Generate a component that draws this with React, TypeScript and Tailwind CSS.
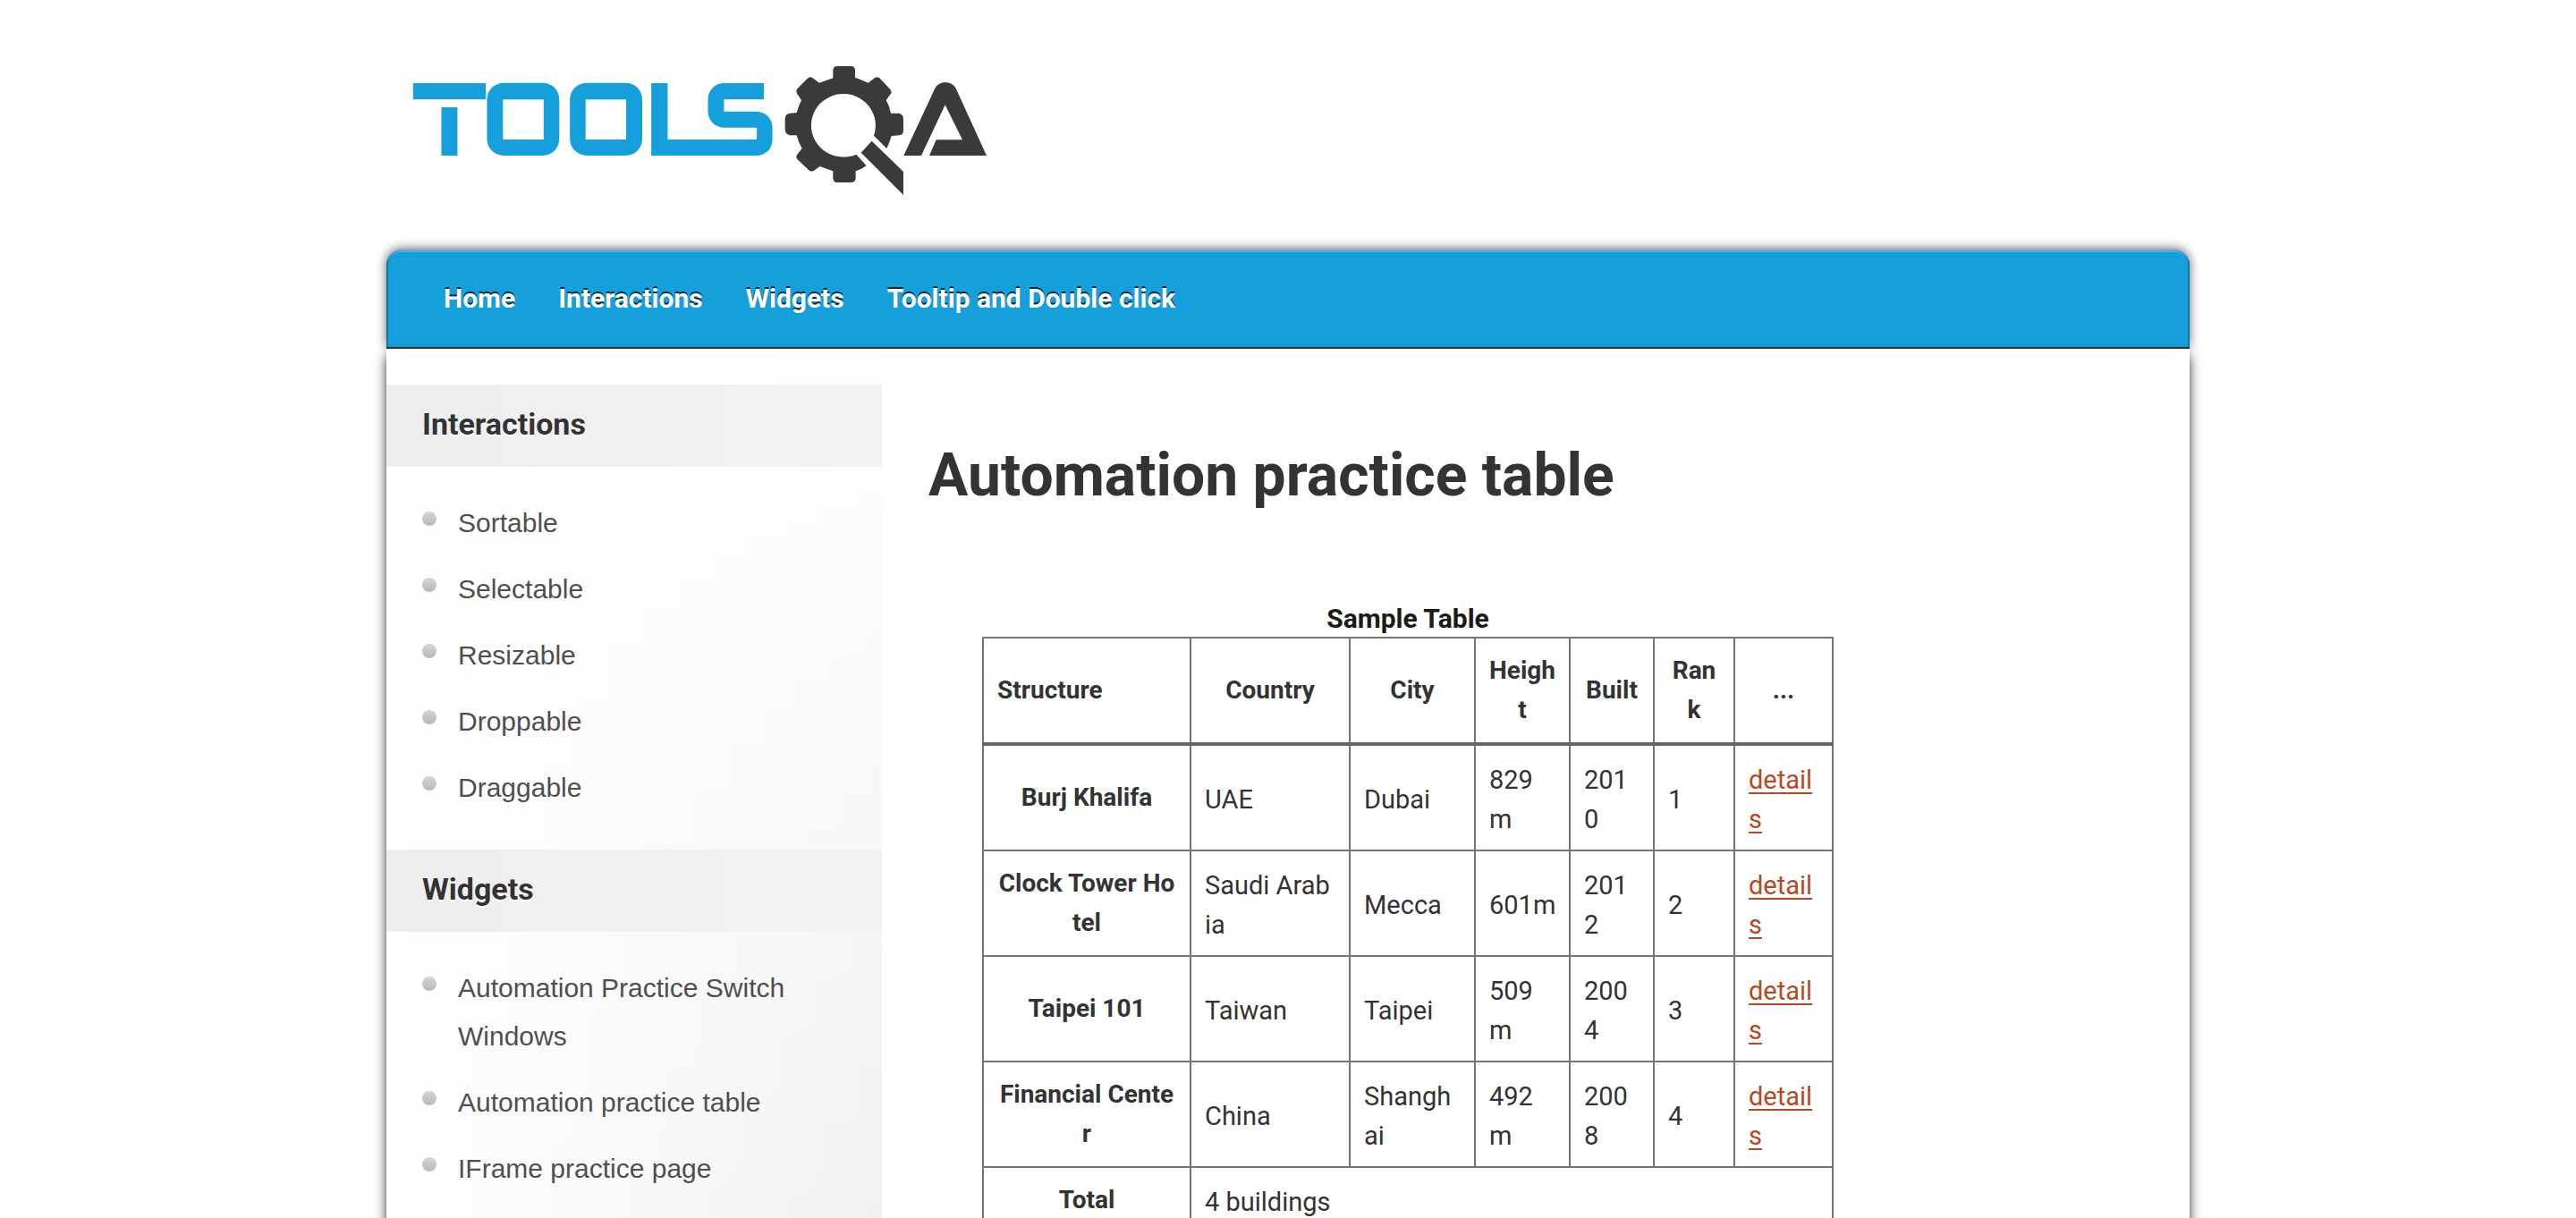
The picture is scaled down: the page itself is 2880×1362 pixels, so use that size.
import React from "react";

const navItems = ["Home", "Interactions", "Widgets", "Tooltip and Double click"];

const sections = [
  { title: "Interactions", items: ["Sortable", "Selectable", "Resizable", "Droppable", "Draggable"] },
  {
    title: "Widgets",
    items: ["Automation Practice Switch Windows", "Automation practice table", "IFrame practice page"],
  },
];

const columns = [
  { label: "Structure", width: "w-[232px]", align: "text-left" },
  { label: "Country", width: "w-[178px]", align: "text-center" },
  { label: "City", width: "w-[140px]", align: "text-center" },
  { label: "Heigh\nt", width: "w-[106px]", align: "text-center" },
  { label: "Built", width: "w-[94px]", align: "text-center" },
  { label: "Ran\nk", width: "w-[90px]", align: "text-center" },
  { label: "...", width: "w-[110px]", align: "text-center" },
];

const rows = [
  { name: "Burj Khalifa", cells: ["UAE", "Dubai", "829\nm", "201\n0", "1"] },
  { name: "Clock Tower Ho\ntel", cells: ["Saudi Arab\nia", "Mecca", "601m", "201\n2", "2"] },
  { name: "Taipei 101", cells: ["Taiwan", "Taipei", "509\nm", "200\n4", "3"] },
  { name: "Financial Cente\nr", cells: ["China", "Shangh\nai", "492\nm", "200\n8", "4"] },
];

const head = "font-['Roboto',sans-serif] font-bold text-[#333333]";
const th = "border-2 border-[#757575] px-[15px] py-3.5 text-[28px] leading-[44px] whitespace-pre";
const td = "border-2 border-[#757575] px-[15px] pt-4 pb-3 text-[29px] leading-[44px] whitespace-pre text-[#333333]";

function Logo() {
  return (
    <svg viewBox="432 50 708 190" className="block h-[190px] w-[708px]" role="img" aria-label="ToolsQA">
      <g transform="translate(420 50) scale(0.4592 0.3333)" fill="#159fdb">
        <path d="M91 129H268V183H91ZM160 210H199V372H160Z" />
        <path
          fillRule="evenodd"
          d="M313 128H406C430 128 447 152 447 184V316C447 348 430 372 406 372H313C289 372 271 348 271 316V184C271 152 289 128 313 128ZM310 184V318H409V184Z"
        />
        <path
          fillRule="evenodd"
          d="M515 128H608C632 128 649 152 649 184V316C649 348 632 372 608 372H515C491 372 473 348 473 316V184C473 152 491 128 515 128ZM511 184V318H610V184Z"
        />
        <path d="M671 129H711V318H928V278H850C826 278 809 254 809 224V184C809 152 826 129 850 129H945V183H848V224H926C950 224 966 248 966 278V318C966 350 950 372 925 372H671Z" />
      </g>
      <g transform="translate(850 60) scale(0.3333)" fill="#3a3a3a">
        <path d="M258 42H304Q318 42 318 56V80Q340 87 362 98L384 81Q392 76 400 82L436 120Q442 128 438 134L422 156Q434 176 438 200L466 200Q480 204 480 218V258Q480 272 466 274L440 276Q434 298 424 318L381 275A108 106 0 1 0 322 338L356 376Q340 388 320 394V416Q320 432 304 432H258Q244 432 244 416V394Q222 386 200 378L180 392Q170 398 162 390L124 354Q118 346 124 338L140 318Q128 298 122 274H98Q84 270 83 256V218Q84 202 98 200L122 198Q128 176 138 156L122 132Q118 124 124 118L160 82Q168 76 176 82L198 98Q222 90 244 82V56Q244 42 258 42Z" />
        <path d="M374 293L480 396V474L338 332Z" />
        <path d="M481 342L586 116Q598 96 620 96Q644 96 656 116L759 342H567L590 289H678L620 172L540 342Z" />
      </g>
    </svg>
  );
}

export default function App() {
  return (
    <div className="h-screen overflow-hidden bg-white">
      <div className="mx-auto w-[70%]">
        <header className="pt-[50px] pb-10">
          <a href="#home" className="inline-block align-top">
            <Logo />
          </a>
        </header>

        <nav className="rounded-t-2xl border-b-2 border-[#333333] bg-[#159fdb] shadow-[inset_0_2px_0_#3fb0e2,inset_2px_0_0_#0f76a3,inset_-2px_0_0_#0f76a3,0_-2px_12px_rgba(0,0,0,0.6)]">
          <ul className="flex gap-12 py-8 pr-10 pl-16 font-['Roboto',sans-serif] text-[30px] leading-[44px] font-bold text-white [text-shadow:0_-2px_0_rgba(0,0,0,0.75)]">
            {navItems.map((item) => (
              <li key={item}>
                <a href="#nav">{item}</a>
              </li>
            ))}
          </ul>
        </nav>

        <div className="flex bg-white shadow-[0_8px_12px_rgba(0,0,0,0.8)]">
          <aside className="w-[554px] shrink-0 bg-[linear-gradient(to_bottom,#ffffff,transparent),linear-gradient(to_right,#ffffff,#f1f1f1)] pt-10">
            {sections.map((section) => (
              <section key={section.title}>
                <h2
                  className={`${head} bg-[linear-gradient(to_right,#eeeeee,#f3f3f3)] px-10 pt-[22px] pb-[26px] text-[34px] leading-[44px] [text-shadow:0_2px_0_#ffffff]`}
                >
                  {section.title}
                </h2>
                <ul className="flex flex-col gap-5 px-10 pt-9 pb-[42px]">
                  {section.items.map((item) => (
                    <li key={item} className="flex gap-6">
                      <span className="mt-3.5 size-4 shrink-0 rounded-full bg-[linear-gradient(to_bottom,#d6d6d6,#b8b8b8)]" />
                      <a
                        href="#page"
                        className="max-w-[400px] font-['Liberation_Sans',sans-serif] text-[30px] leading-[54px] text-[#4f4f4f]"
                      >
                        {item}
                      </a>
                    </li>
                  ))}
                </ul>
              </section>
            ))}
          </aside>

          <main className="min-w-0 flex-1 pt-[102px] pl-[52px]">
            <h1 className={`${head} text-[66px] leading-[80px]`}>Automation practice table</h1>
            <table className="mt-24 ml-[60px] w-[952px] table-fixed border-collapse font-['Roboto',sans-serif]">
              <caption className="pt-1 text-[30px] leading-[40px] font-bold text-[#1a1a1a]">Sample Table</caption>
              <thead>
                <tr>
                  {columns.map((col) => (
                    <th key={col.label} scope="col" className={`${head} ${th} ${col.width} ${col.align} border-b-4 border-b-[#666666]`}>
                      {col.label}
                    </th>
                  ))}
                </tr>
              </thead>
              <tbody>
                {rows.map((row) => (
                  <tr key={row.name}>
                    <th scope="row" className={`${head} ${th}`}>
                      {row.name}
                    </th>
                    {row.cells.map((cell, i) => (
                      <td key={i} className={td}>
                        {cell}
                      </td>
                    ))}
                    <td className={td}>
                      <a href="#details" className="text-[#b44a24] underline decoration-2 underline-offset-4">
                        {"detail\ns"}
                      </a>
                    </td>
                  </tr>
                ))}
              </tbody>
              <tfoot>
                <tr>
                  <th scope="row" className={`${head} ${th}`}>
                    Total
                  </th>
                  <td colSpan={6} className={td}>
                    4 buildings
                  </td>
                </tr>
              </tfoot>
            </table>
          </main>
        </div>
      </div>
    </div>
  );
}
